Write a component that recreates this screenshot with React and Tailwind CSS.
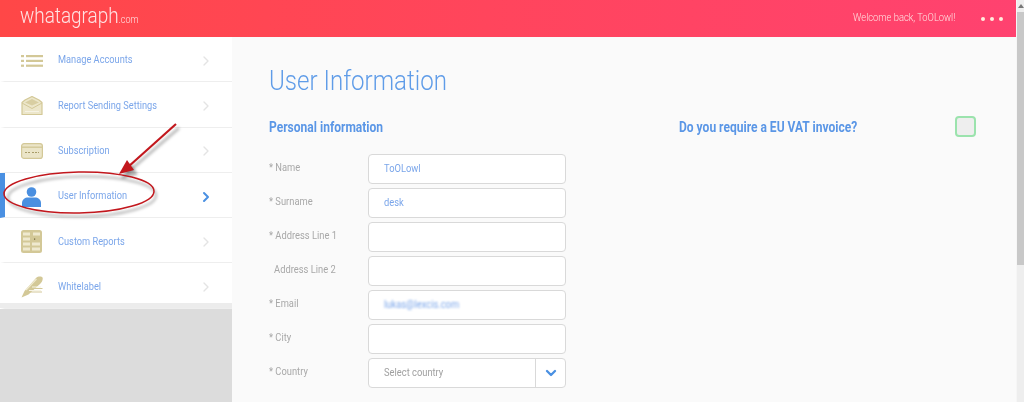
import { ChevronRight, ChevronDown } from 'lucide-react'

const TAN = '#d3c897'

function ListIcon() {
  return (
    <svg width="22" height="12" viewBox="0 0 22 12" fill={TAN}>
      <rect x="0" y="0" width="3" height="2.2" />
      <rect x="5" y="0" width="17" height="2.2" />
      <rect x="0" y="4.8" width="3" height="2.2" />
      <rect x="5" y="4.8" width="17" height="2.2" />
      <rect x="0" y="9.6" width="3" height="2.2" />
      <rect x="5" y="9.6" width="17" height="2.2" />
    </svg>
  )
}

function EnvelopeIcon() {
  return (
    <svg width="22" height="19" viewBox="0 0 22 19">
      <path d="M1 18.5 V6.5 L4 4 L11 0.5 L18 4 L21 6.5 V18.5 Z" fill="#ece6ca" stroke={TAN} strokeWidth="1.2" strokeLinejoin="round" />
      <path d="M4 6.5 L11 3 L18 6.5 L11 9.5 Z" fill="#d8cea2" />
      <path d="M1 7 L11 12.5 L21 7" fill="none" stroke={TAN} strokeWidth="1" />
      <path d="M4 15.5 H18" stroke="#f6f3e4" strokeWidth="1" />
    </svg>
  )
}

function CardIcon() {
  return (
    <svg width="22" height="16" viewBox="0 0 22 16">
      <rect x="0.6" y="0.6" width="20.8" height="14.8" rx="2.5" fill="#ebe5c8" stroke={TAN} strokeWidth="1.2" />
      <rect x="1" y="3.5" width="20" height="1.4" fill={TAN} />
      <path d="M4 9.5 H9 M11 9.5 H18" stroke="#a89c68" strokeWidth="1" strokeDasharray="2 1" />
    </svg>
  )
}

function UserIcon() {
  return (
    <svg width="19" height="20" viewBox="0 0 19 20" fill="#4a8fe0">
      <circle cx="9.5" cy="5" r="4.8" />
      <path d="M0 20 V16 C0 12.5 3 10.5 6 10.5 H13 C16 10.5 19 12.5 19 16 V20 Z" />
    </svg>
  )
}

function TableIcon() {
  return (
    <svg width="21" height="23" viewBox="0 0 21 23">
      <rect width="21" height="23" rx="2.5" fill={TAN} />
      <path d="M2 2.5 H9 V5.5 H2 Z M12 2.5 H19 V5.5 H12 Z M2 7.5 H9 V10.5 H2 Z M2 12.5 H9 V15.5 H2 Z M11 12.5 H19 V15.5 H11 Z M2 17.5 H9 V20.5 H2 Z M11 17.5 H19 V20.5 H11 Z" fill="#efe9cf" />
      <rect x="13" y="8.5" width="1.2" height="1.2" fill="#6b6238" />
    </svg>
  )
}

function PenIcon() {
  return (
    <svg width="22" height="22" viewBox="0 0 22 22">
      <path d="M0.5 21.5 L3.5 15 L15 2 C17 0.2 20.5 0.2 21.5 1.5 C22.3 3.5 21 6 19 8 L7.5 18.5 Z" fill={TAN} />
      <path d="M9 16 H21 M12 12.5 H21.5" stroke="#d3c897" strokeWidth="1.2" />
      <path d="M8 14.5 H20 M11 11 H20" stroke="#f6f3e4" strokeWidth="1.1" />
      <path d="M5 14 L15.5 3" stroke="#efe9cf" strokeWidth="1.2" />
    </svg>
  )
}

const NAV_ITEMS = [
  { label: 'Manage Accounts', icon: ListIcon },
  { label: 'Report Sending Settings', icon: EnvelopeIcon },
  { label: 'Subscription', icon: CardIcon },
  { label: 'User Information', icon: UserIcon, active: true },
  { label: 'Custom Reports', icon: TableIcon },
  { label: 'Whitelabel', icon: PenIcon },
]

const FIELDS = [
  { label: '* Name', value: 'ToOLowl' },
  { label: '* Surname', value: 'desk' },
  { label: '* Address Line 1' },
  { label: 'Address Line 2', indent: true },
  { label: '* Email', value: 'lukas@lexcis.com', blurred: true },
  { label: '* City' },
]

function Field({ label, value, indent, blurred }) {
  return (
    <div className="flex items-center h-[30px]">
      <span className={`w-[99px] text-[11px] text-[#a8a8a8] -mt-[2px] origin-left scale-x-[0.85] whitespace-nowrap ${indent ? 'pl-[6px]' : ''}`}>{label}</span>
      <div className="w-[198px] h-[30px] bg-white border border-[#d9d9d9] rounded-[4px] flex items-center pl-[15px] text-[11px] text-[#7ba6ea]">
        <span className={`origin-left scale-x-[0.85] ${blurred ? 'blur-[1px]' : ''}`}>{value}</span>
      </div>
    </div>
  )
}

export default function App() {
  return (
    <div className="w-[1024px] h-[402px] overflow-hidden flex flex-col relative bg-[#fafafa] font-['Roboto',sans-serif]">
      {/* Header */}
      <header className="h-[37px] shrink-0 flex items-center pl-[20px] pr-[19px] bg-gradient-to-r from-[#ff4747] to-[#ff4270] text-white">
        <div className="text-[22px] leading-none font-light -mt-[5px] origin-left scale-x-[0.86] whitespace-nowrap text-[#ffe3e3]">
          whatagraph<span className="text-[10.5px]">.com</span>
        </div>
        <span className="ml-auto text-[11px] font-light text-[#ffe0e0] origin-right scale-x-[0.85] whitespace-nowrap">Welcome back, ToOLowl!</span>
        <div className="flex gap-[5px] ml-[26px] mr-[2px]">
          <span className="w-[4px] h-[4px] rounded-full bg-[#ffeedd]" />
          <span className="w-[4px] h-[4px] rounded-full bg-[#ffeedd]" />
          <span className="w-[4px] h-[4px] rounded-full bg-[#ffeedd]" />
        </div>
      </header>

      <div className="flex flex-1 min-h-0">
        {/* Sidebar */}
        <aside className="w-[232px] shrink-0 flex flex-col bg-[#dcdcdc]">
          {NAV_ITEMS.map(({ label, icon: Icon, active }) => (
            <div
              key={label}
              className={`relative h-[45.3px] shrink-0 flex items-center pt-[3px] bg-white border-b border-[#eeeeee] ${active ? 'border-l-[5px] border-l-[#4a90e2]' : 'border-l-[5px] border-l-white'}`}
            >
              <div className="w-[47px] flex justify-center pl-[6px]">
                <Icon />
              </div>
              <span className="ml-[6px] text-[11px] text-[#7ba6ea] origin-left scale-x-[0.84] whitespace-nowrap">{label}</span>
              <ChevronRight
                className={`ml-auto mr-[18px] w-[16px] h-[16px] ${active ? 'text-[#4a90e2]' : 'text-[#e4e4e4]'}`}
                strokeWidth={active ? 3 : 2}
              />
              {label === 'Whitelabel' && (
                <div className="absolute -left-[5px] right-0 bottom-0 h-[5px] bg-[#ececec]" />
              )}
            </div>
          ))}
        </aside>

        {/* Main */}
        <main className="flex-1 pl-[37px] pt-[28px] text-[#5a96e6]">
          <h1 className="text-[28px] leading-[32px] font-light text-[#5f9ce8] origin-left scale-x-[0.86] whitespace-nowrap">User Information</h1>
          <div className="flex mt-[20px]">
            <div className="w-[410px]">
              <h2 className="text-[14px] leading-[20px] font-bold origin-left scale-x-[0.86] whitespace-nowrap">Personal information</h2>
              <div className="flex flex-col gap-[4px] mt-[17px]">
                {FIELDS.map((f) => (
                  <Field key={f.label} {...f} />
                ))}
                <div className="flex items-center h-[30px]">
                  <span className="w-[99px] text-[11px] text-[#a8a8a8] -mt-[2px] origin-left scale-x-[0.85] whitespace-nowrap">* Country</span>
                  <div className="w-[198px] h-[30px] bg-white border border-[#d9d9d9] rounded-[4px] flex items-center">
                    <div className="flex-1 pl-[15px] text-[11px] text-[#a0a0a0]">
                      <span className="block origin-left scale-x-[0.85] whitespace-nowrap">Select country</span>
                    </div>
                    <span className="w-[30px] h-full border-l border-[#d9d9d9] flex items-center justify-center">
                      <ChevronDown className="w-[16px] h-[16px] text-[#4a90e2]" strokeWidth={3.5} />
                    </span>
                  </div>
                </div>
              </div>
            </div>
            <div className="flex items-start w-[297px] justify-between">
              <h2 className="text-[14px] leading-[20px] font-bold origin-left scale-x-[0.86] whitespace-nowrap">Do you require a EU VAT invoice?</h2>
              <div className="w-[21px] h-[21px] -mt-[1px] rounded-[4px] bg-[#eeeeee] border-2 border-[#9be3ad]" />
            </div>
          </div>
        </main>
      </div>

      {/* Annotation drawn over the page */}
      <svg className="absolute left-0 top-0 pointer-events-none" width="240" height="240" viewBox="0 0 240 240" fill="none">
        <g stroke="#000" strokeOpacity="0.3" className="blur-[1.5px]" transform="translate(3 4)">
          <ellipse cx="79" cy="192.5" rx="74" ry="20" strokeWidth="2" transform="rotate(-1 79 192.5)" />
          <path d="M176 124 L124 169" strokeWidth="2.5" />
          <path d="M119 174 L127 160 L134 170 Z" fill="#000" fillOpacity="0.3" />
        </g>
        <ellipse cx="79" cy="192.5" rx="75" ry="20.5" stroke="#c2171d" strokeWidth="1.5" transform="rotate(-1 79 192.5)" />
        <path d="M176 124 L128 167" stroke="#c2171d" strokeWidth="2.2" />
        <path d="M119 174 L127 160 L134 170 Z" fill="#c2171d" />
      </svg>

      {/* Window scrollbar */}
      <div className="absolute right-0 top-0 bottom-0 w-[8px] bg-[#eeeeee] border-l border-[#f6f6f6] flex flex-col">
        <div className="h-[12px] flex items-center justify-center">
          <span className="w-0 h-0 border-l-[3px] border-r-[3px] border-b-[4px] border-l-transparent border-r-transparent border-b-[#777]" />
        </div>
        <div className="h-[253px] bg-[#c8c8c8]" />
      </div>
    </div>
  )
}
